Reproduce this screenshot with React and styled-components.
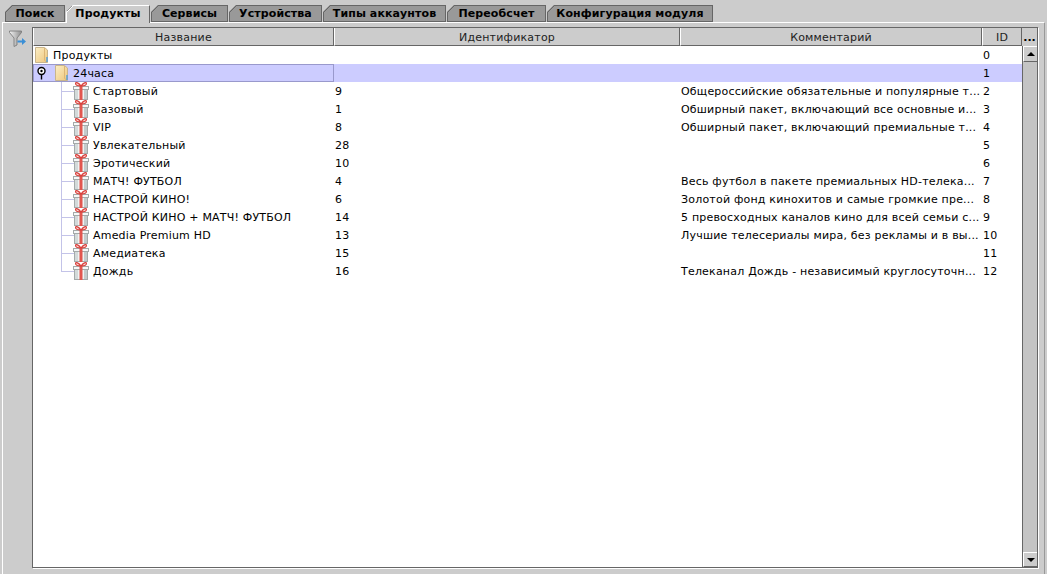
import React from "react";
import styled, { createGlobalStyle } from "styled-components";

const tabs = ["Поиск", "Продукты", "Сервисы", "Устройства", "Типы аккаунтов", "Переобсчет", "Конфигурация модуля"];
const tabWidths = [61, 85, 78, 94, 124, 100, 167];

const columns = [
  { title: "Название", w: 301 },
  { title: "Идентификатор", w: 346 },
  { title: "Комментарий", w: 302 },
  { title: "ID", w: 40 },
];

const products = [
  ["Стартовый", "9", "Общероссийские обязательные и популярные т...", "2"],
  ["Базовый", "1", "Обширный пакет, включающий все основные и...", "3"],
  ["VIP", "8", "Обширный пакет, включающий премиальные т...", "4"],
  ["Увлекательный", "28", "", "5"],
  ["Эротический", "10", "", "6"],
  ["МАТЧ! ФУТБОЛ", "4", "Весь футбол в пакете премиальных HD-телека...", "7"],
  ["НАСТРОЙ КИНО!", "6", "Золотой фонд кинохитов и самые громкие пре...", "8"],
  ["НАСТРОЙ КИНО + МАТЧ! ФУТБОЛ", "14", "5 превосходных каналов кино для всей семьи с...", "9"],
  ["Amedia Premium HD", "13", "Лучшие телесериалы мира, без рекламы и в вы...", "10"],
  ["Амедиатека", "15", "", "11"],
  ["Дождь", "16", "Телеканал Дождь - независимый круглосуточн...", "12"],
];

function FolderIcon() {
  return (
    <svg width="14" height="18" viewBox="0 0 14 18">
      <defs>
        <linearGradient id="folderFill" x1="0" y1="0" x2="1" y2="1">
          <stop offset="0" stopColor="#fbeec6" />
          <stop offset="1" stopColor="#eec77c" />
        </linearGradient>
      </defs>
      <path d="M0.5 1.5 H9.5 L12.5 4 V16.5 H0.5 Z" fill="url(#folderFill)" stroke="#c9b58c" />
      <path d="M9.5 2 V14.5 L12 16" fill="none" stroke="#dcb676" />
      <path d="M12 11 V16" stroke="#5aa0d8" strokeWidth="1.5" />
    </svg>
  );
}

function GiftIcon() {
  return (
    <svg width="16" height="18" viewBox="0 0 16 18" style={{ flexShrink: 0 }}>
      <rect x="1.5" y="6.5" width="13" height="11" fill="#eef3f3" stroke="#a4aaaa" />
      <rect x="2" y="7" width="3" height="10" fill="#d3dada" />
      <rect x="11" y="7" width="3" height="10" fill="#c3cbcb" />
      <rect x="0.5" y="4.5" width="15" height="3" fill="#f6f8f8" stroke="#a4aaaa" />
      <rect x="6.5" y="4" width="3" height="14" fill="#e2564f" />
      <path d="M8 4 C6 1 2.5 -0.5 2.5 1.5 C2.5 3.5 5 4 8 4 C11 4 13.5 3.5 13.5 1.5 C13.5 -0.5 10 1 8 4 Z" fill="#f8d6d2" stroke="#d9403c" strokeWidth="1.1" />
    </svg>
  );
}

function FilterIcon() {
  return (
    <svg width="18" height="18" viewBox="0 0 18 18">
      <defs>
        <linearGradient id="funnelFill" x1="0" y1="0" x2="1" y2="0">
          <stop offset="0" stopColor="#f0f0f0" />
          <stop offset="1" stopColor="#8e8e8e" />
        </linearGradient>
      </defs>
      <path d="M0.5 1 H12.5 V2.5 L8 8 V15 L5 16.5 V8 L0.5 2.5 Z" fill="url(#funnelFill)" stroke="#7d7d7d" strokeWidth="0.9" />
      <path d="M8.5 10.5 H13 V8 L17 11.5 L13 15 V12.5 H8.5 Z" fill="#3b8fd6" />
    </svg>
  );
}

function HandleIcon() {
  return (
    <svg width="10" height="14" viewBox="0 0 10 14">
      <circle cx="4.5" cy="5" r="3.5" fill="#fff" stroke="#000" strokeWidth="1.4" />
      <circle cx="4.5" cy="5" r="1.2" fill="#000" />
      <path d="M4.5 9 V13.5" stroke="#000" strokeWidth="1.4" />
    </svg>
  );
}

export default function App() {
  return (
    <Page>
      <Global />
      <TabBar>
        {tabs.map((t, i) => (
          <Tab key={t} $w={tabWidths[i]} $active={i === 1}>{t}</Tab>
        ))}
      </TabBar>
      <Panel>
        <FilterColumn>
          <FilterIcon />
        </FilterColumn>
        <TableBox>
          <Header>
            {columns.map((c) => (
              <HeaderCell key={c.title} $w={c.w}>{c.title}</HeaderCell>
            ))}
            <Corner>...</Corner>
          </Header>
          <Body>
            <Rows>
              <Row>
                <NameCell $indent={2}>
                  <FolderIcon />
                  <Label>Продукты</Label>
                </NameCell>
                <Cell $w={346} />
                <Cell $w={302} />
                <Cell $w={40}>0</Cell>
              </Row>
              <Row $selected>
                <NameCell $indent={4} $focused>
                  <HandleIcon />
                  <FolderGap><FolderIcon /></FolderGap>
                  <Label>24часа</Label>
                </NameCell>
                <Cell $w={346} />
                <Cell $w={302} />
                <Cell $w={40}>1</Cell>
              </Row>
              {products.map(([name, code, note, id], i) => (
                <Row key={id}>
                  <NameCell $indent={40}>
                    <Connector $last={i === products.length - 1} />
                    <GiftIcon />
                    <Label>{name}</Label>
                  </NameCell>
                  <Cell $w={346}>{code}</Cell>
                  <Cell $w={302}>{note}</Cell>
                  <Cell $w={40}>{id}</Cell>
                </Row>
              ))}
            </Rows>
            <ScrollBar>
              <ScrollButton $h={16}><UpArrow /></ScrollButton>
              <ScrollTrack />
              <ScrollButton $h={15}><DownArrow /></ScrollButton>
            </ScrollBar>
          </Body>
        </TableBox>
      </Panel>
    </Page>
  );
}

const Global = createGlobalStyle`
  html, body { margin: 0; padding: 0; background: #cccccc; overflow: hidden; }
  body { font-family: "DejaVu Sans", sans-serif; }
`;

const Page = styled.div`
  width: 1047px;
  height: 574px;
  background: #cccccc;
  padding: 5px 0 0 0;
  box-sizing: border-box;
  display: flex;
  flex-direction: column;
`;

const TabBar = styled.div`
  display: flex;
  height: 17px;
  padding-left: 5px;
  gap: 1px;
`;

const Tab = styled.div`
  width: ${(p) => p.$w - 1}px;
  height: ${(p) => (p.$active ? 18 : 17)}px;
  box-sizing: border-box;
  flex-shrink: 0;
  background-image: linear-gradient(
    135deg,
    #666666 0 5px,
    ${(p) => (p.$active ? "#ffffff" : "#666666")} 5px 6px,
    ${(p) => (p.$active ? "#cccccc" : "#999999")} 6px
  );
  background-origin: border-box;
  border: 1px solid #666666;
  border-bottom: ${(p) => (p.$active ? "none" : "1px solid #666666")};
  border-top-color: ${(p) => (p.$active ? "#ffffff" : "#666666")};
  border-left-color: ${(p) => (p.$active ? "#ffffff" : "#666666")};
  clip-path: polygon(7px 0, 100% 0, 100% 100%, 0 100%, 0 7px);
  font-size: 11px;
  font-weight: 700;
  letter-spacing: 0.1px;
  line-height: 15px;
  text-align: center;
  color: #000;
  white-space: nowrap;
  z-index: ${(p) => (p.$active ? 1 : 0)};
  position: relative;
`;

const Panel = styled.div`
  flex: 1;
  margin: 0 2px 0 2px;
  border-top: 1px solid #ffffff;
  border-left: 1px solid #ffffff;
  border-right: 1px solid #999999;
  display: flex;
  padding: 4px 6px 6px 0;
  min-height: 0;
`;

const FilterColumn = styled.div`
  width: 29px;
  flex-shrink: 0;
  padding: 3px 0 0 6px;
  box-sizing: border-box;
`;

const TableBox = styled.div`
  flex: 1;
  display: flex;
  flex-direction: column;
  border: 1px solid #666666;
  box-shadow: 1px 1px 0 #ffffff;
  min-width: 0;
`;

const Header = styled.div`
  display: flex;
  height: 18px;
  flex-shrink: 0;
  background: #cccccc;
`;

const HeaderCell = styled.div`
  width: ${(p) => p.$w}px;
  flex-shrink: 0;
  box-sizing: border-box;
  border-right: 1px solid #666666;
  border-bottom: 1px solid #666666;
  border-left: 1px solid #ffffff;
  font-size: 11px;
  letter-spacing: 0.2px;
  line-height: 19px;
  text-align: center;
  color: #222;
`;

const Corner = styled.div`
  flex: 1;
  font-size: 11px;
  font-weight: 700;
  line-height: 19px;
  text-align: center;
  color: #000;
`;

const Body = styled.div`
  flex: 1;
  display: flex;
  min-height: 0;
`;

const Rows = styled.div`
  width: 989px;
  flex-shrink: 0;
  background: #ffffff;
`;

const Row = styled.div`
  display: flex;
  height: 18px;
  background: ${(p) => (p.$selected ? "#ccccff" : "transparent")};
`;

const Cell = styled.div`
  width: ${(p) => p.$w}px;
  flex-shrink: 0;
  box-sizing: border-box;
  padding-left: 1px;
  font-size: 11px;
  letter-spacing: 0.2px;
  line-height: 20px;
  height: 18px;
  color: #000;
  white-space: nowrap;
  overflow: hidden;
`;

const NameCell = styled(Cell)`
  width: 301px;
  display: flex;
  align-items: center;
  position: relative;
  padding-left: ${(p) => p.$indent}px;
  ${(p) => p.$focused && "outline: 1px solid #9999cc; outline-offset: -1px;"}
`;

const FolderGap = styled.div`
  display: flex;
  margin-left: 8px;
`;

const Label = styled.span`
  margin-left: 4px;
  padding-top: 2px;
`;

const Connector = styled.div`
  position: absolute;
  left: 28px;
  top: 0;
  width: 12px;
  height: 9px;
  border-left: 1px solid #c3c3e8;
  border-bottom: 1px solid #c3c3e8;
  &::after {
    content: "";
    display: ${(p) => (p.$last ? "none" : "block")};
    position: absolute;
    left: -1px;
    top: 9px;
    height: 9px;
    border-left: 1px solid #c3c3e8;
  }
`;

const ScrollBar = styled.div`
  flex: 1;
  display: flex;
  flex-direction: column;
  border-left: 1px solid #666666;
`;

const ScrollButton = styled.div`
  height: ${(p) => p.$h}px;
  flex-shrink: 0;
  box-sizing: border-box;
  border-top: 1px solid #ffffff;
  border-left: 1px solid #ffffff;
  border-bottom: 1px solid #666666;
  display: flex;
  align-items: center;
  justify-content: center;
  background: #cccccc;
`;

const ScrollTrack = styled.div`
  flex: 1;
  background: #c4c4c4;
`;

const UpArrow = styled.div`
  width: 0;
  height: 0;
  border-left: 4px solid transparent;
  border-right: 4px solid transparent;
  border-bottom: 4px solid #000;
`;

const DownArrow = styled.div`
  width: 0;
  height: 0;
  border-left: 4px solid transparent;
  border-right: 4px solid transparent;
  border-top: 4px solid #000;
`;
